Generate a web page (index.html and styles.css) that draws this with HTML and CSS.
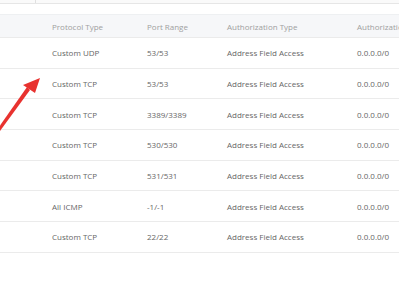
FILE: index.html
```html
<!DOCTYPE html>
<html lang="en">
<head>
    <meta charset="UTF-8">
    <title>Security Group Rules</title>
    <link rel="stylesheet" href="styles.css">
</head>
<body>
    <div class="toolbar">
        <div class="tab"></div>
    </div>

    <div class="rules">
        <div class="row head">
            <div class="cell"></div>
            <div class="cell">Protocol Type</div>
            <div class="cell">Port Range</div>
            <div class="cell">Authorization Type</div>
            <div class="cell">Authorization Object</div>
        </div>
        <div class="row">
            <div class="cell"></div>
            <div class="cell">Custom UDP</div>
            <div class="cell">53/53</div>
            <div class="cell">Address Field Access</div>
            <div class="cell">0.0.0.0/0</div>
        </div>
        <div class="row">
            <div class="cell"></div>
            <div class="cell">Custom TCP</div>
            <div class="cell">53/53</div>
            <div class="cell">Address Field Access</div>
            <div class="cell">0.0.0.0/0</div>
        </div>
        <div class="row">
            <div class="cell"></div>
            <div class="cell">Custom TCP</div>
            <div class="cell">3389/3389</div>
            <div class="cell">Address Field Access</div>
            <div class="cell">0.0.0.0/0</div>
        </div>
        <div class="row">
            <div class="cell"></div>
            <div class="cell">Custom TCP</div>
            <div class="cell">530/530</div>
            <div class="cell">Address Field Access</div>
            <div class="cell">0.0.0.0/0</div>
        </div>
        <div class="row">
            <div class="cell"></div>
            <div class="cell">Custom TCP</div>
            <div class="cell">531/531</div>
            <div class="cell">Address Field Access</div>
            <div class="cell">0.0.0.0/0</div>
        </div>
        <div class="row">
            <div class="cell"></div>
            <div class="cell">All ICMP</div>
            <div class="cell">-1/-1</div>
            <div class="cell">Address Field Access</div>
            <div class="cell">0.0.0.0/0</div>
        </div>
        <div class="row">
            <div class="cell"></div>
            <div class="cell">Custom TCP</div>
            <div class="cell">22/22</div>
            <div class="cell">Address Field Access</div>
            <div class="cell">0.0.0.0/0</div>
        </div>
    </div>

    <!-- annotation arrow drawn over the table -->
    <svg class="arrow" width="60" height="140" viewBox="0 0 60 140">
        <polygon points="-1,127 0,131 30,90 27,87" fill="#e8322f"/>
        <polygon points="40,78 23,85 35,93" fill="#e8322f"/>
    </svg>
</body>
</html>
```

FILE: styles.css
```css
body {
    font-family: "Open Sans", Arial, sans-serif;
    font-size: 8px;
    color: #666;
    background: #fff;
    margin: 0;
    padding: 0;
    overflow: hidden;
}
.toolbar {
    height: 3px;
    border-bottom: 1px solid #e6e6e6;
    background: #fafafa;
}
.toolbar .tab {
    width: 35px;
    height: 3px;
    border-right: 1px solid #e0e0e0;
}
.rules {
    margin-top: 10px;
}
.row {
    display: grid;
    grid-template-columns: 40px 95px 80px 130px 1fr;
    align-items: center;
    height: 30.7px;
    border-bottom: 1px solid #ebebeb;
    box-sizing: border-box;
}
.row.head {
    height: 24px;
    background: #f6f7f9;
    border-top: 1px solid #eef0f2;
    color: #a0a0a0;
}
.cell {
    padding-left: 12px;
    white-space: nowrap;
    overflow: hidden;
}
.cell:first-child {
    padding-left: 0;
}
.arrow {
    position: absolute;
    left: 0;
    top: 0;
}
```
